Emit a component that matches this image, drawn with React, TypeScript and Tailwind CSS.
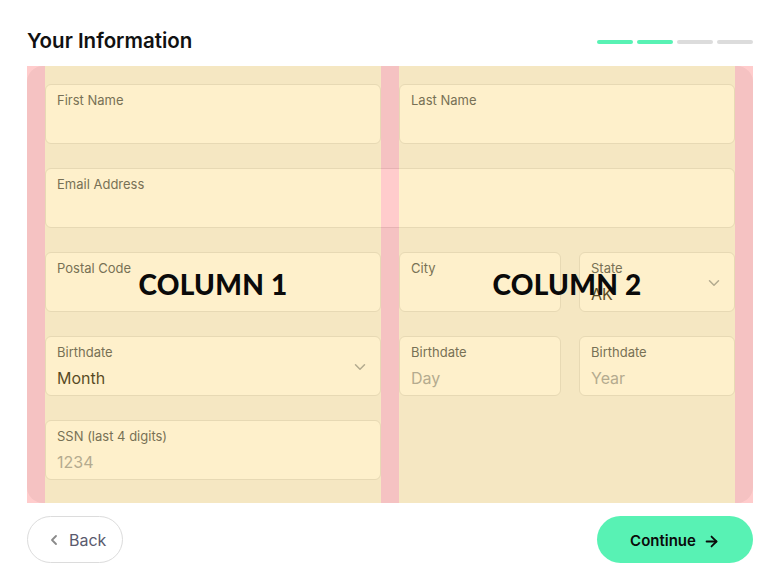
import { ChevronDown, ChevronLeft, ArrowRight } from "lucide-react";

type FieldProps = {
    label: string;
    value?: string;
    placeholder?: string;
    select?: boolean;
    className?: string;
};

function Field({ label, value, placeholder, select, className = "" }: FieldProps) {
    return (
        <div className={`relative h-[60px] rounded-md border border-[#e0e0e0] bg-white px-[11px] pt-[7px] ${className}`}>
            <div className="text-[13px] leading-4 text-[#4b5563]">{label}</div>
            {value && <div className="mt-2 text-[16px] leading-5 text-[#1f1f1f]">{value}</div>}
            {placeholder && <div className="mt-2 text-[16px] leading-5 text-[#9ca3af]">{placeholder}</div>}
            {select && (
                <ChevronDown className="absolute right-[11px] top-[21px] h-[18px] w-[18px] text-[#9ca3af]" strokeWidth={2} />
            )}
        </div>
    );
}

export default function App() {
    return (
        <div className="h-[588px] w-[780px] bg-white px-[27px] font-['Inter',sans-serif]">
            {/* Header */}
            <div className="flex h-[66px] items-center justify-between pt-[17px]">
                <h1 className="text-[20.5px] font-semibold text-[#111]">Your Information</h1>
                <div className="flex gap-1">
                    <div className="h-1 w-9 rounded-full bg-[#58f2b4]" />
                    <div className="h-1 w-9 rounded-full bg-[#58f2b4]" />
                    <div className="h-1 w-9 rounded-full bg-[#dcdcdc]" />
                    <div className="h-1 w-9 rounded-full bg-[#dcdcdc]" />
                </div>
            </div>

            {/* Form panel */}
            <div className="relative h-[437px] rounded-2xl bg-[#f3f3f3] px-[18px] pt-[18px]">
                <div className="grid grid-cols-2 gap-x-[18px] gap-y-[24px]">
                    <Field label="First Name" />
                    <Field label="Last Name" />
                    <Field label="Email Address" className="col-span-2" />
                    <Field label="Postal Code" />
                    <div className="grid grid-cols-[162px_1fr] gap-x-[18px]">
                        <Field label="City" />
                        <Field label="State" value="AK" select />
                    </div>
                    <Field label="Birthdate" value="Month" select />
                    <div className="grid grid-cols-[162px_1fr] gap-x-[18px]">
                        <Field label="Birthdate" placeholder="Day" />
                        <Field label="Birthdate" placeholder="Year" />
                    </div>
                    <Field label="SSN (last 4 digits)" placeholder="1234" />
                </div>

                {/* Grid overlay */}
                <div className="pointer-events-none absolute inset-0 flex">
                    <div className="w-[18px] bg-[rgba(255,0,0,0.2)]" />
                    <div className="flex flex-1 items-center justify-center pb-[1px] bg-[rgba(251,195,47,0.25)]">
                        <span className="font-['Lato',sans-serif] text-[28px] font-black tracking-[0.01em] text-[#0a0a0a]">COLUMN 1</span>
                    </div>
                    <div className="w-[18px] bg-[rgba(255,0,0,0.2)]" />
                    <div className="flex flex-1 items-center justify-center pb-[1px] bg-[rgba(251,195,47,0.25)]">
                        <span className="font-['Lato',sans-serif] text-[28px] font-black tracking-[0.01em] text-[#0a0a0a]">COLUMN 2</span>
                    </div>
                    <div className="w-[18px] bg-[rgba(255,0,0,0.2)]" />
                </div>
            </div>

            {/* Footer */}
            <div className="mt-[13px] flex items-center justify-between">
                <button className="flex h-[47px] items-center gap-[7px] rounded-full border border-[#dcdcdc] bg-white pl-[18px] pr-[16px] text-[16px] text-[#5a5a6e]">
                    <ChevronLeft className="h-4 w-4 text-[#8a8a8a]" strokeWidth={2.75} />
                    Back
                </button>
                <button className="flex h-[47px] w-[156px] items-center justify-center gap-[7px] rounded-full bg-[#58f2b4] pt-[3px] text-[15px] font-semibold text-[#0a0a0a]">
                    Continue
                    <ArrowRight className="h-[17px] w-[17px]" strokeWidth={2.5} />
                </button>
            </div>
        </div>
    );
}
